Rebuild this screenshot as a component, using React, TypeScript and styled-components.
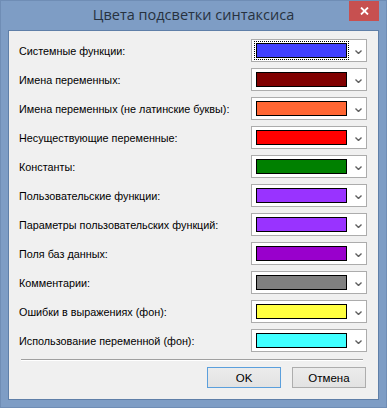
import React from 'react';
import styled, { createGlobalStyle } from 'styled-components';

const GlobalStyle = createGlobalStyle`
  html,
  body {
    margin: 0;
    padding: 0;
    background: #7e9cc4;
  }

  * {
    box-sizing: border-box;
  }
`;

const Window = styled.div`
  width: 387px;
  height: 408px;
  background: #7e9dc5;
  border: 1px solid #6f8db5;
  display: flex;
  flex-direction: column;
`;

const TitleBar = styled.div`
  height: 29px;
  display: grid;
  grid-template-columns: 1fr auto 1fr;
  align-items: start;
`;

const Title = styled.div`
  grid-column: 2;
  padding-top: 4px;
  font-family: 'Open Sans', 'Noto Sans', sans-serif;
  font-size: 14.5px;
  color: #27323f;
  white-space: nowrap;
`;

const CloseButton = styled.div`
  grid-column: 3;
  justify-self: end;
  margin-right: 7px;
  width: 30px;
  height: 20px;
  background: #c75050;
  display: flex;
  align-items: center;
  justify-content: center;
`;

const Client = styled.div`
  margin: 0 7px 7px;
  flex: 1;
  background: #f0f0f0;
  border: 1px solid #5f7fa8;
  display: flex;
  flex-direction: column;
  padding: 8px 11px 0 10px;
  font-family: Tahoma, 'Liberation Sans', Arial, sans-serif;
  font-size: 10.8px;
  color: #000;
`;

const Rows = styled.div`
  display: grid;
  grid-template-columns: 1fr 116px;
  grid-auto-rows: 23px;
  row-gap: 6px;
  align-items: center;
`;

const Label = styled.div`
  white-space: nowrap;
  padding-top: 1px;
`;

const Combo = styled.div`
  height: 23px;
  background: #fff;
  border: 1px solid #acacac;
  display: flex;
  align-items: center;
  padding-left: 2px;
`;

const SwatchFrame = styled.div<{ $focused?: boolean }>`
  padding: 1px;
  border: 1px dotted ${(p) => (p.$focused ? '#000' : 'transparent')};
`;

const Swatch = styled.div<{ $color: string }>`
  width: 91px;
  height: 15px;
  border: 1px solid #000;
  background: ${(p) => p.$color};
`;

const Arrow = styled.div`
  flex: 1;
  display: flex;
  justify-content: center;
  padding: 2px 0 0 2px;
`;

const Separator = styled.div`
  margin: 7px 4px 0 2px;
  border-top: 1px solid #a0a0a0;
  border-bottom: 1px solid #fff;
`;

const ButtonBar = styled.div`
  display: flex;
  justify-content: flex-end;
  gap: 11px;
  margin-top: 6px;
  padding-right: 1px;
`;

const Button = styled.div<{ $default?: boolean }>`
  width: 74px;
  height: 21px;
  display: flex;
  align-items: center;
  justify-content: center;
  font-size: 11.5px;
  background: linear-gradient(#ececec, #e2e2e2);
  border: 1px solid ${(p) => (p.$default ? '#5b9fdc' : '#adadad')};
`;

const colors: [string, string][] = [
  ['Системные функции:', '#4040ff'],
  ['Имена переменных:', '#800000'],
  ['Имена переменных (не латинские буквы):', '#ff6633'],
  ['Несуществующие переменные:', '#ff0000'],
  ['Константы:', '#008000'],
  ['Пользовательские функции:', '#9933ff'],
  ['Параметры пользовательских функций:', '#9933ff'],
  ['Поля баз данных:', '#9900cc'],
  ['Комментарии:', '#808080'],
  ['Ошибки в выражениях (фон):', '#ffff40'],
  ['Использование переменной (фон):', '#40ffff'],
];

function Chevron() {
  return (
    <svg width="7" height="4" viewBox="0 0 7 4">
      <path d="M0.5 0.5 L3.5 3.5 L6.5 0.5" fill="none" stroke="#606060" strokeWidth="1.4" />
    </svg>
  );
}

export default function App() {
  return (
    <>
      <GlobalStyle />
      <Window>
        <TitleBar>
          <Title>Цвета подсветки синтаксиса</Title>
          <CloseButton>
            <svg width="9" height="8" viewBox="0 0 9 8">
              <path d="M1 0.5 L8 7.5 M8 0.5 L1 7.5" stroke="#fff" strokeWidth="1.8" />
            </svg>
          </CloseButton>
        </TitleBar>
        <Client>
          <Rows>
            {colors.map(([label, color], i) => (
              <React.Fragment key={label}>
                <Label>{label}</Label>
                <Combo>
                  <SwatchFrame $focused={i === 0}>
                    <Swatch $color={color} />
                  </SwatchFrame>
                  <Arrow>
                    <Chevron />
                  </Arrow>
                </Combo>
              </React.Fragment>
            ))}
          </Rows>
          <Separator />
          <ButtonBar>
            <Button $default>OK</Button>
            <Button>Отмена</Button>
          </ButtonBar>
        </Client>
      </Window>
    </>
  );
}
